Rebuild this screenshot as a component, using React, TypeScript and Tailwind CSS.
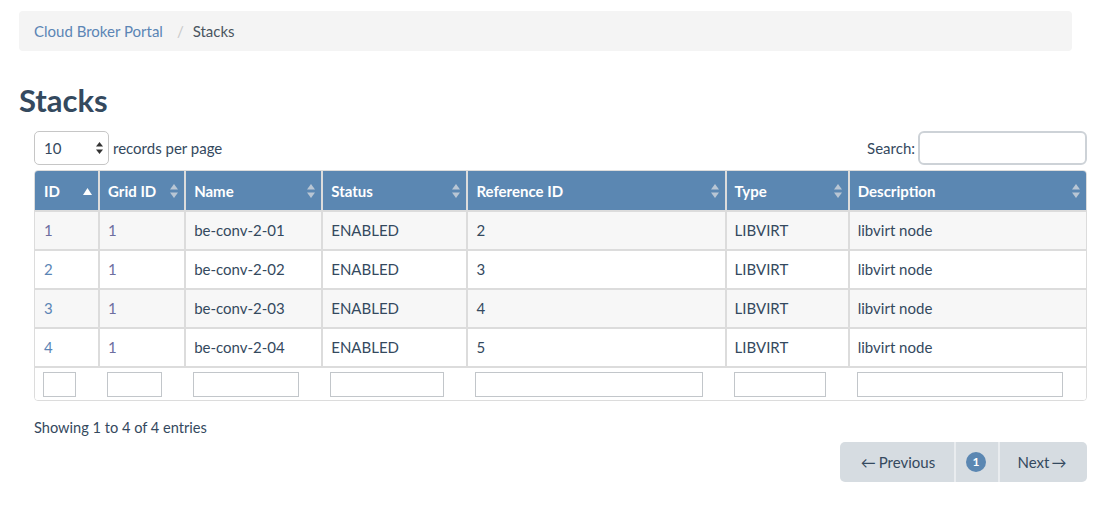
import React from "react";

type Row = { id: number; gridId: number; name: string; status: string; refId: number; type: string; desc: string };

const rows: Row[] = [
  { id: 1, gridId: 1, name: "be-conv-2-01", status: "ENABLED", refId: 2, type: "LIBVIRT", desc: "libvirt node" },
  { id: 2, gridId: 1, name: "be-conv-2-02", status: "ENABLED", refId: 3, type: "LIBVIRT", desc: "libvirt node" },
  { id: 3, gridId: 1, name: "be-conv-2-03", status: "ENABLED", refId: 4, type: "LIBVIRT", desc: "libvirt node" },
  { id: 4, gridId: 1, name: "be-conv-2-04", status: "ENABLED", refId: 5, type: "LIBVIRT", desc: "libvirt node" },
];

const columns = [
  { label: "ID", width: "w-[64px]", input: "w-[33px]" },
  { label: "Grid ID", width: "w-[86px]", input: "w-[55px]" },
  { label: "Name", width: "w-[137px]", input: "w-[106px]" },
  { label: "Status", width: "w-[145px]", input: "w-[114px]" },
  { label: "Reference ID", width: "w-[258px]", input: "w-[228px]" },
  { label: "Type", width: "w-[123px]", input: "w-[92px]" },
  { label: "Description", width: "w-[237px]", input: "w-[206px]" },
];

const SortBoth = () => (
  <svg width="8" height="14" viewBox="0 0 8 14" className="text-[#b9c6d4]">
    <path d="M4 0 L8 5.5 H0 Z" fill="currentColor" />
    <path d="M4 14 L8 8.5 H0 Z" fill="currentColor" />
  </svg>
);

const SortAsc = () => (
  <svg width="9" height="7" viewBox="0 0 9 7" className="text-white">
    <path d="M4.5 0 L9 7 H0 Z" fill="currentColor" />
  </svg>
);

export default function App() {
  return (
    <div className="w-[1109px] h-[507px] bg-white font-['Lato',sans-serif] text-[#34495e] text-[15px]">
      <div className="pt-[11px] pl-[19px]">
        {/* breadcrumb */}
        <div className="w-[1053px] h-[40px] rounded bg-[#f4f4f4] flex items-center pl-[15px] text-[15px]">
          <span className="text-[#5b85b5]">Cloud Broker Portal</span>
          <span className="text-[#c8c8c8] px-[9px] ml-[5px]">/</span>
          <span className="text-[#4a5560]">Stacks</span>
        </div>

        <h1 className="mt-[31px] text-[31px] font-bold leading-[36px] text-[#34495e]">Stacks</h1>
      </div>

      <div className="ml-[34px] w-[1053px] mt-[13px]">
        <div className="flex items-center justify-between h-[34px]">
          <div className="flex items-center gap-[4px]">
            <div className="w-[75px] h-[34px] border border-[#c6c6c6] rounded-[5px] flex items-center justify-between pl-[9px] pr-[5px]">
              <span>10</span>
              <svg width="7" height="12" viewBox="0 0 7 12" className="text-[#333]">
                <path d="M3.5 0 L7 4.5 H0 Z" fill="currentColor" />
                <path d="M3.5 12 L7 7.5 H0 Z" fill="currentColor" />
              </svg>
            </div>
            <span>records per page</span>
          </div>
          <div className="flex items-center gap-[3px]">
            <span>Search:</span>
            <div className="w-[169px] h-[34px] border-2 border-[#cdd2d7] rounded-[6px] bg-white" />
          </div>
        </div>

        <div className="mt-[5px] border border-[#dcdcdc] rounded-[4px] overflow-hidden">
          <table className="border-collapse table-fixed w-[1051px]">
            <thead>
              <tr className="bg-[#5b87b2] text-white h-[40px]">
                {columns.map((c, i) => (
                  <th
                    key={c.label}
                    className={`${c.width} ${i > 0 ? "border-l-2 border-[#dcdcdc] pl-[8px]" : "pl-[9px]"} border-b-2 border-b-[#dcdcdc] text-left font-bold pr-[6px] pt-[1px]`}
                  >
                    <div className="flex items-center justify-between">
                      <span>{c.label}</span>
                      {i === 0 ? <SortAsc /> : <SortBoth />}
                    </div>
                  </th>
                ))}
              </tr>
            </thead>
            <tbody>
              {rows.map((r, idx) => (
                <tr key={r.id} className={`h-[39px] ${idx % 2 === 0 ? "bg-[#f7f7f7]" : "bg-white"}`}>
                  <td className="pl-[9px] pr-[8px] border-b-2 border-[#dcdcdc]">
                    <span className={idx === 0 ? "text-[#6d6ea0]" : "text-[#5b85b5]"}>{r.id}</span>
                  </td>
                  <td className="px-[8px] border-l-2 border-b-2 border-[#dcdcdc]">
                    <span className="text-[#6d6ea0]">{r.gridId}</span>
                  </td>
                  <td className="px-[8px] border-l-2 border-b-2 border-[#dcdcdc]">{r.name}</td>
                  <td className="px-[8px] border-l-2 border-b-2 border-[#dcdcdc]">{r.status}</td>
                  <td className="px-[8px] border-l-2 border-b-2 border-[#dcdcdc]">{r.refId}</td>
                  <td className="px-[8px] border-l-2 border-b-2 border-[#dcdcdc]">{r.type}</td>
                  <td className="px-[8px] border-l-2 border-b-2 border-[#dcdcdc]">{r.desc}</td>
                </tr>
              ))}
              <tr className="h-[33px] bg-white">
                {columns.map((c) => (
                  <td key={c.label} className="pl-[8px] align-middle">
                    <div className={`${c.input} h-[25px] border border-[#c2c6ca] bg-white`} />
                  </td>
                ))}
              </tr>
            </tbody>
          </table>
        </div>

        <div className="mt-[18px] leading-[18px] text-[14.6px]">Showing 1 to 4 of 4 entries</div>

        <div className="flex justify-end mt-[5px]">
          <div className="flex h-[40px] rounded-[5px] overflow-hidden bg-[#d6dce1] text-[15px] text-[#34495e]">
            <div className="w-[114px] flex items-center justify-center pl-[2px]">
              <span className="mr-[3px]">←</span>Previous
            </div>
            <div className="w-[2px] bg-[#e9ecef]" />
            <div className="w-[42px] flex items-center justify-center pr-[2px]">
              <span className="w-[20px] h-[20px] rounded-full bg-[#5b87b2] text-white text-[12px] font-bold flex items-center justify-center">1</span>
            </div>
            <div className="w-[2px] bg-[#e9ecef]" />
            <div className="w-[87px] flex items-center justify-center pr-[3px]">
              Next<span className="ml-[2px]">→</span>
            </div>
          </div>
        </div>
      </div>
    </div>
  );
}
